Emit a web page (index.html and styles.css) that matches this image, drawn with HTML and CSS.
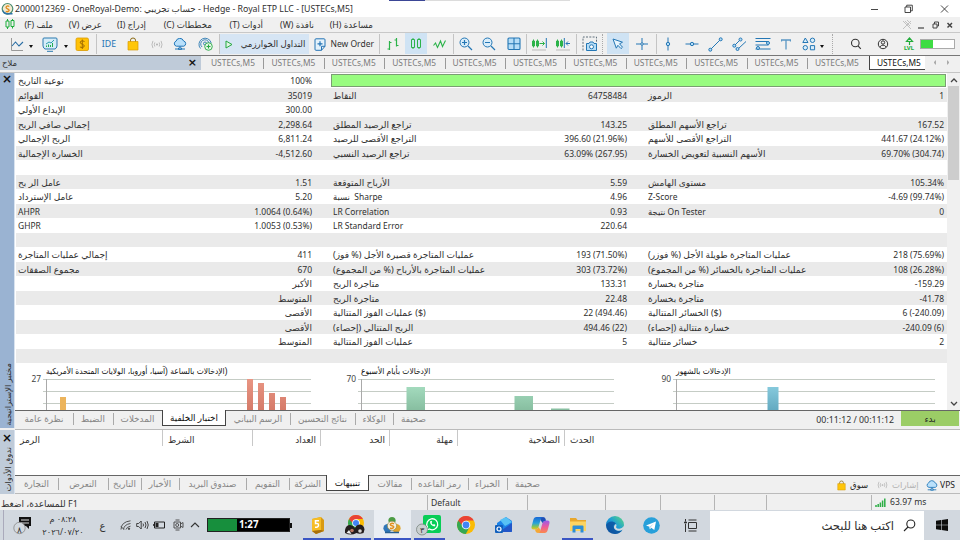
FILE: index.html
```html
<!DOCTYPE html>
<html lang="ar">
<head>
<meta charset="utf-8">
<title>MetaTrader 5</title>
<link rel="stylesheet" href="styles.css">
</head>
<body>
<svg width="0" height="0" class="defs">
  <defs>
    <linearGradient id="gr" x1="0" y1="0" x2="0" y2="1"><stop offset="0" stop-color="#e99583"/><stop offset="1" stop-color="#d47a68"/></linearGradient>
    <linearGradient id="gg" x1="0" y1="0" x2="0" y2="1"><stop offset="0" stop-color="#a3dabd"/><stop offset="1" stop-color="#86bd9f"/></linearGradient>
    <linearGradient id="gb" x1="0" y1="0" x2="0" y2="1"><stop offset="0" stop-color="#86c9dc"/><stop offset="1" stop-color="#62a9c0"/></linearGradient>
    <linearGradient id="cop1" x1="0" y1="0" x2="0" y2="1"><stop offset="0" stop-color="#1767d6"/><stop offset=".5" stop-color="#29a4d8"/><stop offset=".8" stop-color="#8fc649"/><stop offset="1" stop-color="#f2c324"/></linearGradient>
    <linearGradient id="cop2" x1="0" y1="0" x2="0" y2="1"><stop offset="0" stop-color="#9a5bea"/><stop offset=".5" stop-color="#ec5b9c"/><stop offset="1" stop-color="#fb8a4b"/></linearGradient>
    <linearGradient id="edg" x1="0" y1="1" x2="1" y2="0"><stop offset="0" stop-color="#0b57a8"/><stop offset=".5" stop-color="#1a9bd8"/><stop offset="1" stop-color="#5fdc7c"/></linearGradient>
    <symbol id="chrome" viewBox="0 0 18 18"><circle cx="9" cy="9" r="9" fill="#fbbc05"/><path d="M1.2 4.5A9 9 0 0 0 8.8 18L12.6 11Z" fill="#34a853"/><path d="M1.2 4.5A9 9 0 0 1 16.8 4.5H9L5 9Z" fill="#ea4335"/><circle cx="9" cy="9" r="4.3" fill="#fff"/><circle cx="9" cy="9" r="3.4" fill="#4285f4"/></symbol>
    <symbol id="mt" viewBox="0 0 18 18"><circle cx="9" cy="4.5" r="3.6" fill="#4b9c45"/><circle cx="4.6" cy="12.3" r="4.2" fill="#2e76b8"/><circle cx="13.4" cy="12.3" r="4.2" fill="#e0a52c"/><path d="M2 16.5h14" stroke="#286090" stroke-width="1.5"/><circle cx="9" cy="9.8" r="4.6" fill="#f4f1e4" stroke="#9a8b4c" stroke-width=".7"/><path d="M11 7.8Q9 6.5 7.7 7.8T9 9.8T10.3 11.8T7 12" fill="none" stroke="#e29020" stroke-width="1.5"/></symbol>
    <symbol id="coin" viewBox="0 0 13 13"><circle cx="6.500" cy="6.800" r="5.300" fill="#f3ead0" stroke="#4a8d72" stroke-width="1.200"/><path d="M1.500 9Q2 12 6 12.500H11.500V11H6Q3 10.500 2 8Z" fill="#2f74aa"/><path d="M8.300 4.500Q6.800 3.300 5.500 4.500T6.600 6.800T7.700 9.100T4.800 9.300" fill="none" stroke="#e08b1c" stroke-width="1.300"/></symbol>
    <symbol id="cloud" viewBox="0 0 14 12"><path d="M3.5 8.2A2.6 2.6 0 0 1 3 3.2A4 4 0 0 1 10.6 3A2.7 2.7 0 0 1 10.8 8.2Z" fill="#b9e0fb" stroke="#2076b8" stroke-width="1"/><path d="M7 8.2V10.5M2 11H5.5M8.5 11H12M5.5 10h3v1.6h-3z" stroke="#2076b8" stroke-width="1" fill="none"/></symbol>
    <symbol id="bag" viewBox="0 0 12 14"><path d="M3.5 5V3.2A2.5 2.2 0 0 1 8.5 3.2V5" fill="none" stroke="#8a6a14" stroke-width="1"/><path d="M1 4.5H11V13H1Z" fill="#ffc60a" stroke="#d79b07" stroke-width=".7"/></symbol>
    <symbol id="sig" viewBox="0 0 14 10"><path d="M2.5 1Q.3 5 2.5 9M4.6 2.7Q3.4 5 4.6 7.3M11.5 1Q13.7 5 11.5 9M9.4 2.7Q10.6 5 9.4 7.3" fill="none" stroke="#b0b0b0" stroke-width=".9"/><circle cx="7" cy="5" r="1.1" fill="#b0b0b0"/></symbol>
  </defs>
</svg>

<div class="window">
  <header class="titlebar">
    <svg class="applogo" width="13" height="13"><use href="#coin"/></svg>
    <span class="title">2000012369 - OneRoyal-Demo: حساب تجريبي - Hedge - Royal ETP LLC - [USTECs,M5]</span>
    <span class="strip"></span>
    <svg class="winctl" width="86" height="16" viewBox="0 0 86 16" fill="none" stroke="#333" stroke-width=".9"><path d="M4 8.500h7M38 6h5.500v5.500h-5.500zM39.700 6v-1.800h5.600v5.600h-1.800M74 4.500l7 7M81 4.500l-7 7"/></svg>
  </header>

  <nav class="menubar">
    <svg width="10" height="11" viewBox="0 0 10 11" fill="none" stroke="#1fae3c" stroke-width="1"><path d="M2.500 0v2M2.500 8v2M7.500 0v1.500M7.500 7.500v2M1 2h3v6h-3zM6 1.500h3v6h-3z"/></svg>
    <span class="m1">ملف (F)</span><span class="m2">عرض (V)</span><span class="m3">إدراج (I)</span><span class="m4">مخططات (C)</span><span class="m5">أدوات (T)</span><span class="m6">نافذة (W)</span><span class="m7">مساعدة (H)</span>
    <svg class="mdictl" width="54" height="12" viewBox="0 0 54 12" fill="none" stroke="#444" stroke-width="1.2"><path d="M2 2l8 8M10 2l-8 8M4 2l5 5M6 1l4 4" stroke="#bbb" stroke-width=".9"/><path d="M17 9h6"/><path d="M32 5h4v4h-4zM33.500 5v-2h4v4h-1.500" stroke-width="1"/><path d="M46.500 4l4.500 4.500M51 4l-4.500 4.500" stroke-width="1.500"/></svg>
  </nav>

  <div class="toolbar">
    <span></span>
    <i><svg width="14" height="13" viewBox="0 0 14 13" fill="none"><path d="M1.500 0v12.500H13" stroke="#999"/><path d="M2 8L5.500 4L9 8L13 4" stroke="#2b6fa5" stroke-width="1.100"/></svg></i>
    <i class="st"><b class="caret"></b></i>
    <i><svg width="16" height="15" viewBox="0 0 16 15" fill="none" stroke="#2a7ab0"><path d="M2 1h12q1 0 1 1v7q-.5 2.500-2 3h-10q-1.500-.5-2-3v-7q0-1 1-1z" fill="#d6ecf8"/><path d="M4 7l3-2 2 1 3-3" stroke="#2c9fae"/><path d="M4.500 10v-1.500M6.500 10v-2.500M8.500 10v-2M10.500 10v-4" stroke="#22ad52"/><path d="M5 14.300h6" /></svg></i>
    <i><b class="caret"></b></i>
    <i><svg width="14" height="14" viewBox="0 0 14 14"><rect x="1" y="1" width="12.500" height="12.500" rx="1.500" fill="#ffc107" stroke="#d99b00" stroke-width=".8"/><path d="M9.500 4.500Q7 3 5.500 4.500T7.200 7.200T9 9.800T4.900 10M7.300 2.500v9.500" fill="none" stroke="#a06c00" stroke-width="1"/></svg></i>
    <i class="sep ide">IDE</i>
    <i><svg width="12" height="14"><use href="#bag"/></svg></i>
    <i><svg width="14" height="9"><use href="#sig"/></svg></i>
    <i><svg width="14" height="12"><use href="#cloud"/></svg></i>
    <i><svg width="15" height="14" viewBox="0 0 15 14" fill="none" stroke="#2d7ab2" stroke-width=".9"><circle cx="7" cy="6.500" r="1.500"/><path d="M4 10A4.200 4.200 0 1 1 11 6M2.500 11.500A6.200 6.200 0 1 1 13.200 6"/><circle cx="10.500" cy="9.500" r="3.800" fill="#e4f7e6" stroke="#27a844"/><path d="M8.500 9.500h4M10.500 7.500v4" stroke="#27a844" stroke-width="1.100"/></svg></i>
    <i class="sep algo"><svg width="8" height="9" viewBox="0 0 8 9"><path d="M1 1v7l6-3.500z" fill="#e2f4e4" stroke="#25a93f"/></svg><span>التداول الخوارزمي</span></i>
    <i class="neworder"><svg width="12" height="13" viewBox="0 0 12 13" fill="none" stroke="#2474b5"><path d="M2 .8h8q1 0 1 1v6.500l-3.500 4H2q-1 0-1-1v-9.500q0-1 1-1zM11 8.300H7.500v4" fill="#e4f2fb"/><path d="M3.500 5.800h5M6 3.300v5" stroke-width="1.200"/></svg><span>New Order</span></i>
    <i class="sep"><svg width="14" height="13" viewBox="0 0 14 13" fill="none" stroke="#2cb34a" stroke-width="1.200"><path d="M3.500 3v9M3.500 4.500h2M1.500 11h2M10.500 0v8.500M8.500 2h2M10.500 7.500h2"/></svg></i>
    <i class="on"><svg width="12" height="13" viewBox="0 0 12 13" fill="none" stroke="#2cb34a"><path d="M1.500 2.500h3v8h-3zM7.500 2.500h3v8h-3zM3 1v1.500M3 10.500v1.500M9 1v1.500M9 10.500v1.500"/></svg></i>
    <i><svg width="14" height="10" viewBox="0 0 14 10" fill="none" stroke="#2cb34a" stroke-width="1.100"><path d="M.5 6.500L2.500 4l2 4.500L7.500 2l2 5.500L12.500 1.500"/></svg></i>
    <i class="sep"><svg width="14" height="14" viewBox="0 0 14 14" fill="#d9edfa" stroke="#2477b5"><circle cx="5.500" cy="5.500" r="4.500"/><path d="M9 9l4 4M3 5.500h5M5.500 3v5" stroke-width="1.200"/></svg></i>
    <i><svg width="14" height="14" viewBox="0 0 14 14" fill="#d9edfa" stroke="#2477b5"><circle cx="5.500" cy="5.500" r="4.500"/><path d="M9 9l4 4M3 5.500h5" stroke-width="1.200"/></svg></i>
    <i><svg width="14" height="14" viewBox="0 0 14 14" fill="#b5ddf7" stroke="#2477b5" stroke-width="1.100"><rect x="1" y="1" width="12" height="11.500" rx="1"/><path d="M7 1v11.500M1 6.700h12"/></svg></i>
    <i class="sep"><svg width="16" height="14" viewBox="0 0 16 14" fill="none" stroke="#2cb34a"><path d="M1.500 4h2v5h-2zM5.500 4h2v5h-2zM2.500 2.500v8M6.500 2.500v8M8.500 6.500h5M11.500 4.500l2 2-2 2"/><path d="M15.300 1v10" stroke="#2477b5"/><path d="M1 13h14" stroke="#bbb"/></svg></i>
    <i><svg width="16" height="14" viewBox="0 0 16 14" fill="#2cb34a" stroke="#2cb34a"><path d="M1.500 4h2v5h-2zM5.500 4h2v5h-2zM2.500 2.500v8M6.500 2.500v8"/><path d="M9.300 1v10M15 6.500h-4M13 4.500l-2 2 2 2" stroke="#2477b5" fill="none"/><path d="M1 13h14" stroke="#bbb"/></svg></i>
    <i class="sep"><svg width="16" height="16" viewBox="0 0 16 16" fill="none"><path d="M1 14.500V1h13.500v5" stroke="#60717d" stroke-dasharray="2 1.300"/><path d="M4.500 7.500h2.500l1-1.500h3l1 1.500h2.500v7h-10z" fill="#b5ddf7" stroke="#2477b5"/><circle cx="9.500" cy="10.800" r="2" fill="#fff" stroke="#2477b5"/></svg></i>
    <i class="dots"></i>
    <i class="on"><svg width="12" height="13" viewBox="0 0 12 13"><path d="M1 2l9.500 3.200-3 1.600 3 3.400-1.500 1.400-3.100-3.300-1.600 2.900z" fill="#e9f5fd" stroke="#2477b5"/></svg></i>
    <i><svg width="14" height="14" viewBox="0 0 14 14" fill="none" stroke="#2477b5"><path d="M7 1v4.500M7 8.500v4.500M1 7h4.500M8.500 7H13"/><circle cx="7" cy="7" r="1.300"/></svg></i>
    <i class="sep"><svg width="6" height="14" viewBox="0 0 6 14" fill="#b5ddf7" stroke="#2477b5"><path d="M3 .5v13"/><circle cx="3" cy="7" r="1.700"/></svg></i>
    <i><svg width="14" height="6" viewBox="0 0 14 6" fill="#b5ddf7" stroke="#2477b5"><path d="M.5 3h13"/><circle cx="7" cy="3" r="1.700"/></svg></i>
    <i><svg width="15" height="15" viewBox="0 0 15 15" fill="#b5ddf7" stroke="#2477b5"><path d="M2.500 12.500l10-10"/><circle cx="2.300" cy="12.700" r="1.500"/><circle cx="12.700" cy="2.300" r="1.500"/></svg></i>
    <i><svg width="15" height="15" viewBox="0 0 15 15" fill="#b5ddf7" stroke="#2477b5"><path d="M2 9l6.500-6.500M5.500 12.500l1 -1L14 4.500"/><circle cx="2.300" cy="8.700" r="1.500"/><circle cx="8.500" cy="2.500" r="1.500"/><circle cx="5.500" cy="12" r="1.500"/></svg></i>
    <i><svg width="16" height="14" viewBox="0 0 16 14" fill="#b5ddf7" stroke="#2477b5"><path d="M.5 1.500h15M.5 4.500h13M.5 8h13M.5 12h15"/><circle cx="13" cy="6" r="1.500"/><circle cx="3" cy="11" r="1.500"/></svg></i>
    <i><svg width="10" height="11" viewBox="0 0 10 11" fill="none" stroke="#5b97c4" stroke-width="1.300"><path d="M.5 2.500V1h9v1.500M5 1v9.500"/></svg></i>
    <i><svg width="14" height="14" viewBox="0 0 14 14" fill="#d9edfa" stroke="#2477b5"><path d="M3.300 1L6 5.500H.8z"/><circle cx="10.500" cy="3.300" r="2.200"/><circle cx="3.300" cy="10.700" r="2.200"/><path d="M8.400 8.600h4.200v4.200H8.400z"/></svg></i>
    <i class="st"><b class="caret"></b></i>
    <i class="dots"></i>
    <i><svg width="12" height="12" viewBox="0 0 12 12" fill="none" stroke="#333" stroke-width="1.100"><circle cx="5.300" cy="5" r="3.800"/><path d="M8 7.800l2.800 3"/></svg></i>
    <i><svg width="12" height="12" viewBox="0 0 12 12" fill="none" stroke="#333" stroke-width="1"><circle cx="6" cy="6" r="4.700"/><circle cx="6" cy="4.500" r="1.700"/><path d="M2.800 9q3.200-3.800 6.400 0"/></svg></i>
    <i class="lvl"><svg width="9" height="8" viewBox="0 0 9 8" fill="none" stroke="#22ac3a" stroke-width="1.200"><path d="M4.500 1L1.500 4.500h6zM4.500 4v4"/></svg>LVL</i>
    <i class="batt"><b></b></i>
  </div>

  <div class="tabsrow">
    <div class="navhead"><span>ملاح</span><b>×</b></div>
    <div class="ctab">USTECs,M5</div><div class="ctab">USTECs,M5</div><div class="ctab">USTECs,M5</div><div class="ctab">USTECs,M5</div><div class="ctab">USTECs,M5</div><div class="ctab">USTECs,M5</div><div class="ctab">USTECs,M5</div><div class="ctab">USTECs,M5</div><div class="ctab">USTECs,M5</div><div class="ctab">USTECs,M5</div><div class="ctab">USTECs,M5</div>
    <div class="ctab cur">USTECs,M5</div>
    <div class="arrows"><span></span><span></span></div>
  </div>

  <section class="tester">
    <aside class="side s1"><b>×</b><span>مختبر الإستراتيجية</span></aside>
    <div class="main">
      <div class="report">
        <div class="rows">
          <div class="row"><p>نوعية التاريخ</p><em>100%</em><div class="quality"></div></div>
          <div class="row"><p>القوائم</p><em>35019</em><p>النقاط</p><em>64758484</em><p>الرموز</p><em>1</em></div>
          <div class="row"><p>الإيداع الأولي</p><em>300.00</em></div>
          <div class="row"><p>إجمالي صافي الربح</p><em>2,298.64</em><p>تراجع الرصيد المطلق</p><em>143.25</em><p>تراجع الأسهم المطلق</p><em>167.52</em></div>
          <div class="row"><p>الربح الإجمالي</p><em>6,811.24</em><p>التراجع الأقصى للرصيد</p><em>396.60 (21.96%)</em><p>التراجع الأقصى للأسهم</p><em>441.67 (24.12%)</em></div>
          <div class="row"><p>الخسارة الإجمالية</p><em>-4,512.60</em><p>تراجع الرصيد النسبي</p><em>63.09% (267.95)</em><p>الأسهم النسبية لتعويض الخسارة</p><em>69.70% (304.74)</em></div>
          <div class="row"></div>
          <div class="row"><p>عامل الر بح</p><em>1.51</em><p>الأرباح المتوقعة</p><em>5.59</em><p>مستوى الهامش</p><em>105.34%</em></div>
          <div class="row"><p>عامل الإسترداد</p><em>5.20</em><p class="lat">نسبة&nbsp; Sharpe</p><em>4.96</em><p class="lat">Z-Score</p><em>-4.69 (99.74%)</em></div>
          <div class="row"><p class="lat">AHPR</p><em>1.0064 (0.64%)</em><p class="lat">LR Correlation</p><em>0.93</em><p class="lat">نتيجة On Tester</p><em>0</em></div>
          <div class="row"><p class="lat">GHPR</p><em>1.0053 (0.53%)</em><p class="lat">LR Standard Error</p><em>220.64</em></div>
          <div class="row"></div>
          <div class="row"><p>إجمالي عمليات المتاجرة</p><em>411</em><p><bdi dir="rtl">عمليات المتاجرة قصيرة الأجل (% فوز)</bdi></p><em>193 (71.50%)</em><p><bdi dir="rtl">عمليات المتاجرة طويلة الأجل (% فوزر)</bdi></p><em>218 (75.69%)</em></div>
          <div class="row"><p>مجموع الصفقات</p><em>670</em><p><bdi dir="rtl">عمليات المتاجرة بالأرباح (% من المجموع)</bdi></p><em>303 (73.72%)</em><p><bdi dir="rtl">عمليات المتاجرة بالخسائر (% من المجموع)</bdi></p><em>108 (26.28%)</em></div>
          <div class="row"><p></p><em class="ar">الأكبر</em><p>متاجرة الربح</p><em>133.31</em><p>متاجرة بخسارة</p><em>-159.29</em></div>
          <div class="row"><p></p><em class="ar">المتوسط</em><p>متاجرة الربح</p><em>22.48</em><p>متاجرة بخسارة</p><em>-41.78</em></div>
          <div class="row"><p></p><em class="ar">الأقصى</em><p>عمليات الفوز المتتالية ($)</p><em>22 (494.46)</em><p>الخسائر المتتالية ($)</p><em>6 (-240.09)</em></div>
          <div class="row"><p></p><em class="ar">الأقصى</em><p><bdi dir="rtl">الربح المتتالي (إحصاء)</bdi></p><em>494.46 (22)</em><p><bdi dir="rtl">خسارة متتالية (إحصاء)</bdi></p><em>-240.09 (6)</em></div>
          <div class="row"><p></p><em class="ar">المتوسط</em><p>عمليات الفوز المتتالية</p><em>5</em><p>خسائر متتالية</p><em>2</em></div>
          <div class="row"></div>
          <div class="charts">
            <figure class="f1"><figcaption><bdi dir="rtl">الإدخالات بالساعة (آسيا، أوروبا، الولايات المتحدة الأمريكية</bdi>)</figcaption><span class="ax">27</span>
              <svg width="268" height="33" viewBox="0 0 268 33"><path d="M0 1.500h268M0 13.500h268M0 25.500h268" stroke="#c5ccc5"/><path d="M3.500 1v32" stroke="#aaa"/><rect x="17" y="19" width="6" height="14" fill="#ecb45c"/><path d="M204 1h6v32h-6zM215 5h6v28h-6zM226 15h6v18h-6zM237 19h6v14h-6z" fill="url(#gr)"/></svg></figure>
            <figure class="f2"><figcaption>الإدخالات بأيام الأسبوع</figcaption><span class="ax">70</span>
              <svg width="256" height="33" viewBox="0 0 256 33"><path d="M0 1.500h256M0 13.500h256M0 25.500h256" stroke="#c5ccc5"/><path d="M3.500 1v32" stroke="#aaa"/><path d="M48.500 9h18.500v24h-18.500zM156.500 18h18.500v15h-18.500zM193 30.500h18.500v2.500h-18.500z" fill="url(#gg)"/></svg></figure>
            <figure class="f3"><figcaption>الإدخالات بالشهور</figcaption><span class="ax">90</span>
              <svg width="262" height="33" viewBox="0 0 262 33"><path d="M0 1.500h262M0 13.500h262M0 25.500h262" stroke="#c5ccc5"/><path d="M3.500 1v32" stroke="#aaa"/><path d="M94.500 9h11v24h-11z" fill="url(#gb)"/></svg></figure>
          </div>
        </div>
        <div class="scroll"><svg width="8" height="5" viewBox="0 0 8 5"><path d="M1 4l3-3 3 3" fill="none" stroke="#444" stroke-width="1.300"/></svg><b></b><svg width="8" height="5" viewBox="0 0 8 5"><path d="M1 1l3 3 3-3" fill="none" stroke="#444" stroke-width="1.300"/></svg></div>
      </div>
      <div class="btabs t1">
        <span>نظرة عامة</span><span>الضبط</span><span>المدخلات</span><span class="cur">اختبار الخلفية</span><span>الرسم البياني</span><span>نتائج التحسين</span><span>الوكلاء</span><span>صحيفة</span>
        <div class="time">00:11:12 / 00:11:12</div><div class="start">بدء</div>
      </div>
    </div>
  </section>

  <section class="toolbox">
    <aside class="side s2"><b>×</b><span>ندوق الأدوات</span></aside>
    <div class="main">
      <div class="thead"><span>الرمز</span><span>الشرط</span><span class="r">العداد</span><span class="r">الحد</span><span class="r">مهلة</span><span class="r">الصلاحية</span><span>الحدث</span></div>
      <div class="btabs t2">
        <span>التجارة</span><span>التعرض</span><span>التاريخ</span><span>الأخبار</span><span>صندوق البريد</span><span>التقويم</span><span>الشركة</span><span class="cur">تنبيهات</span><span>مقالات</span><span>رمز القاعده</span><span>الخبراء</span><span>صحيفة</span>
        <div class="links"><svg width="9" height="11"><use href="#bag"/></svg><b class="k1">سوق</b><svg width="11" height="8"><use href="#sig"/></svg><b class="k2">إشارات</b><svg width="12" height="11"><use href="#cloud"/></svg><b class="k3">VPS</b></div>
      </div>
    </div>
  </section>

  <footer class="status">
    <span class="help">للمساعدة، اضغط F1</span><span>Default</span><span></span><span></span><span></span><span></span><span></span>
    <span class="ping"><svg width="11" height="9" viewBox="0 0 11 9"><path d="M1 7v2M3.200 6v3M5.400 4.500v4.500M7.600 2.500v6.500M9.800 .5v8.500" stroke="#2cae45" stroke-width="1.500"/></svg>63.97 ms</span>
  </footer>

  <div class="taskbar">
    <span class="desk"></span>
    <i class="notif"><svg width="19" height="20" viewBox="0 0 19 20"><path d="M6 2h12v9h-2v3l-3-3H6z" fill="#111"/><path d="M8 5h8M8 8h8" stroke="#ddd"/><circle cx="6.500" cy="13" r="5.700" fill="#d3d9df" stroke="#888" stroke-width=".8"/></svg><b>٨</b></i>
    <div class="clock"><span dir="rtl">٠٨:٢٨ م</span><span>٢٠٢٦/٠٧/٢٠</span></div>
    <i class="lang">ع</i>
    <i><svg width="11" height="10" viewBox="0 0 11 10" fill="none" stroke="#444" stroke-width=".9"><path d="M1 9.500Q1 2 10.500 .8M3.500 9.500Q4 4.500 10.500 3.500M6 9.500Q6.500 7 10.500 6.200M1 6.500L4 9.500"/><circle cx="9" cy="8.800" r=".7" fill="#222"/></svg></i>
    <i></i>
    <i class="spk"><svg width="13" height="10" viewBox="0 0 13 10" fill="none" stroke="#333" stroke-width=".9"><path d="M.7 3.500h2l2.500-2.500v8L2.700 6.500h-2zM7 3.500q1 1.500 0 3M9 2q2 3 0 6M11 1q2.500 4 0 8"/></svg></i>
    <i><svg width="12" height="8" viewBox="0 0 12 8"><path d="M1.500 1h10v6h-10zM.3 3v2" fill="none" stroke="#222"/><path d="M2.500 2h3v4h-3z" fill="#222"/></svg></i>
    <i><svg width="11" height="12" viewBox="0 0 11 12" fill="none" stroke="#444" stroke-width=".9"><path d="M1 3h6.500v6h-6.500zM7.500 5l2.500-1.500v5l-2.500-1.500M2.500 1h4M2.500 11h4"/><circle cx="4.200" cy="6" r="1.500"/></svg></i>
    <i><svg width="10" height="6" viewBox="0 0 10 6"><path d="M1 5l4-4 4 4" fill="none" stroke="#333" stroke-width="1.100"/></svg></i>
    <div class="power"><b></b><span>1:27</span></div>
    <i class="run"><svg width="16" height="19" viewBox="0 0 16 19"><path d="M2 3L11 1l3 3v11l-8 3-4-3z" fill="#d99a12"/><path d="M2 3l9-2v13l-9 1z" fill="#f6bd25"/><path d="M2 15l9-1 3 1-8 3z" fill="#a86f0a"/><path d="M9 4.800H5.500v2.700q3-.5 3 1.700T5 11.200" stroke="#fff" fill="none" stroke-width="1.500"/></svg></i>
    <i class="run"><svg width="20" height="20" viewBox="0 0 20 20"><use href="#chrome" x="3" y="0" width="16" height="16"/><path d="M0 15q1-5 5-5 4 .5 5 3.500 1-4 5-4 4 .5 4.500 5l-1 3.500q-4 1.500-7 0-6 3-11.500 0z" fill="#241d1d"/><circle cx="7" cy="15.500" r="1.800" fill="#ba7762"/><circle cx="15" cy="16" r="1.800" fill="#d8d6d4"/><path d="M1.500 18l2.500-3 2.500 4z" fill="#eee"/></svg></i>
    <i class="run act"><svg width="18" height="18"><use href="#mt"/></svg></i>
    <i class="run wa"><svg width="26" height="22" viewBox="0 0 26 22"><rect x="7" y="1" width="18" height="18" rx="2" fill="#08ce57"/><path d="M10.500 16l1-3a5.500 5.500 0 1 1 2 2z" fill="none" stroke="#fff" stroke-width="1.300"/><path d="M14 7.500q0 4 4.500 5l1-1.500-1.500-1-1 .8q-1.300-.8-1.500-2l.7-.8-.7-1.300z" fill="#fff"/><circle cx="6" cy="15.500" r="5.500" fill="#c9cfd0" stroke="#7a8580" stroke-width=".8"/></svg><b>٣</b></i>
    <i><svg width="18" height="18"><use href="#chrome"/></svg></i>
    <i><svg width="19" height="18" viewBox="0 0 19 18"><path d="M3 7l9-6 6 4v10q0 1-1 1H5q-2 0-2-2z" fill="#1c83e8"/><path d="M6 4l6-3 6 5-7 4z" fill="#58c2f5"/><path d="M5 16L18 7v8q0 1-1 1z" fill="#2256c8"/><rect x="1" y="9" width="8" height="8" rx="1" fill="#1260bd"/><circle cx="5" cy="13" r="2" fill="none" stroke="#fff" stroke-width="1.200"/></svg></i>
    <i><svg width="19" height="18" viewBox="0 0 19 18"><path d="M5.500 1H12q-2 .8-2.500 3L7.500 11q-.7 2.500-3 2.500H2.500Q0 13.500.6 10.500L2.300 4Q3 1 5.500 1z" fill="url(#cop1)"/><path d="M13.500 17H7q2-.8 2.500-3l2-7q.7-2.500 3-2.500h2Q19 4.500 18.400 7.500L16.700 14Q16 17 13.500 17z" fill="url(#cop2)"/><path d="M9.500 4Q10 1 12 1q2 0 2.500 1.700l.5 1.800q-2.800 0-3.500 2.500z" fill="#1f50b8"/><path d="M9.500 14Q9 17 7 17q-2 0-2.500-1.700L4 13.500q2.800 0 3.500-2.500z" fill="#f4a836"/></svg></i>
    <i class="run"><svg width="18" height="16" viewBox="0 0 18 16"><path d="M1 1h6l1.500 2H17v4H1z" fill="#e8a72c"/><path d="M1 4.500h16V14H1z" fill="#fcd462"/><path d="M3.500 15.500V9.500q0-1 1-1h9q1 0 1 1v6h-3v-3.500h-5v3.500z" fill="#2d8ed6"/></svg></i>
    <i><svg width="18" height="18" viewBox="0 0 18 18"><circle cx="9" cy="9" r="9" fill="url(#edg)"/><path d="M.1 9Q2 5 6.500 5.500 9.500 6 10 8 7.500 8 7.500 10.500 8 14.500 12 15q2.500.2 4.500-1.300Q13.500 18 9 18 .5 17.500.1 9z" fill="#0c4f9c" opacity=".8"/><path d="M10 8q1 1.500 0 3.200 .8 1.600 3.500 1.500 2.500-.3 4-2.200L17.900 10 18 12.500 16.500 13.700Q14 15.300 11 14.500 7.500 13 8 10.500 8.500 8.500 10 8z" fill="#d3d9df"/></svg></i>
    <i><svg width="17" height="17" viewBox="0 0 17 17"><circle cx="8.500" cy="8.500" r="8.300" fill="#28a0da"/><path d="M3 8.500l10-4-1.700 8.500-3-2.200-1.500 1.500-.4-2.600z" fill="#fff"/><path d="M6.400 9.700l4.500-3.300-3 3.700-1 2z" fill="#bcdcf0"/></svg></i>
    <i><svg width="13" height="13" viewBox="0 0 13 13" fill="none" stroke="#333"><path d="M4.500 3.500h8v6h-8zM4.500 1h8M4.500 12h8M1.500 0v2.500M1.500 5v8"/><path d="M.5 4h2v-1h-2z" fill="#333"/></svg></i>
    <div class="search"><span>اكتب هنا للبحث</span><svg width="13" height="13" viewBox="0 0 13 13" fill="none" stroke="#222" stroke-width="1.100"><circle cx="7.800" cy="5" r="4"/><path d="M5 8L1 12"/></svg></div>
    <i><svg width="12" height="12" viewBox="0 0 12 12" fill="#0d0d0d"><path d="M0 1.700L5 1v4.700H0zM5.600 .9L12 0v5.700H5.600zM0 6.300h5V11l-5-.7zM5.600 6.300H12V12l-6.400-.9z"/></svg></i>
  </div>
</div>
</body>
</html>
```
FILE: styles.css
```css
* { box-sizing: border-box; }
body { margin: 0; width: 960px; height: 540px; overflow: hidden; background: #f0f0f0; color: #303030; font: 8.5px/14px "Noto Sans", "DejaVu Sans", sans-serif; }
.defs { position: absolute; }
i, em { font-style: normal; }
b { font-weight: normal; }
p, figure { margin: 0; }
svg { display: block; flex: none; }
.window { display: flex; flex-direction: column; width: 960px; height: 540px; }

.titlebar { position: relative; display: flex; align-items: center; height: 17px; background: #fff; padding-left: 1px; }
.title { margin-left: 1px; font-size: 8.75px; white-space: pre; padding-top: 1px; }
.strip { position: absolute; left: 389px; top: 0; width: 181px; height: 1px; background: linear-gradient(90deg, #3b4696 36px, #dcdcdc 36px); }
.winctl { margin-left: auto; margin-right: 7px; }

.menubar { display: flex; align-items: center; height: 15px; padding-left: 5px; }
.menubar span { direction: rtl; white-space: nowrap; text-align: right; font-size: 8.7px; padding-top: 1px; }
.m1 { width: 38px; } .m2 { width: 49px; } .m3 { width: 44px; } .m4 { width: 66px; } .m5 { width: 51px; } .m6 { width: 51px; } .m7 { width: 59px; }
.mdictl { margin-left: auto; margin-right: 5px; }

.toolbar { display: grid; height: 24px; border-top: 1px solid #c8c8c8; border-bottom: 1px solid #777; grid-template-columns: 5px 24px 8px 26px 5px 28px 25px 24px 23px 24px 26.5px 90px 70.5px 26px 22px 26px 24px 24px 25px 24px 26px 26px 5px 22px 26.5px 24.5px 23px 24px 24px 23px 24px 22px 12px 12px 24px 30px 22px 40px; }
.toolbar i { position: relative; display: flex; align-items: center; justify-content: center; height: 22px; }
.toolbar .st { justify-content: flex-start; }
.caret { width: 0; height: 0; border: 2.5px solid transparent; border-top: 3px solid #111; border-bottom: 0; margin-top: 4px; }
.toolbar .sep { border-left: 1px solid #c4c4c4; height: 20px; margin-top: 1px; }
.toolbar .on { background: #cfe3f4; height: 21px; margin-top: 0; }
.toolbar .dots { border-left: 1px dotted #aaa; height: 20px; margin-top: 1px; }
.toolbar .ide { color: #2474b5; font-size: 8.8px; }
.toolbar .algo { background: #d6e5f4; gap: 8px; padding-left: 2px; font-size: 8.6px; white-space: nowrap; }
.toolbar .neworder { gap: 5px; white-space: nowrap; font-size: 8.5px; }
.toolbar .lvl { flex-direction: column; color: #22ac3a; font: bold 6px/6px Roboto, sans-serif; }
.toolbar .batt { justify-content: flex-start; }
.batt b { width: 35px; height: 10px; border: 1px solid #aaa; background: linear-gradient(90deg, #3edc43 12px, #fff 12px); }

.tabsrow { display: flex; height: 17px; border-bottom: 1px solid #c4c4c4; }
.navhead { display: flex; justify-content: space-between; width: 201px; padding: 0 4px 0 2px; height: 14px; background: #bfcbd9; line-height: 14px; }
.navhead b { font: bold 11px/14px "DejaVu Sans"; color: #111; }
.ctab { position: relative; width: 60.4px; padding-left: 10px; line-height: 14px; color: #7c7c7c; font-size: 8.4px; white-space: nowrap; }
.ctab + .ctab::before { content: ""; position: absolute; left: 2px; top: 2px; width: 1px; height: 11px; background: #999; }
.ctab.cur { width: 56px; margin-left: 3.6px; padding-left: 7px; height: 14px; background: #fff; color: #111; border: solid #444; border-width: 0 0 1px 1px; }
.ctab.cur::before { display: none; }
.arrows { display: flex; gap: 11px; margin: 4px 0 0 9px; }
.arrows span { border: 2.500px solid transparent; border-right-color: #aaa; border-left: 0; height: 5px; }
.arrows span + span { border-left: 2.500px solid #aaa; border-right: 0; }

.tester { display: flex; height: 357px; }
.main { display: flex; flex-direction: column; flex: 1; min-width: 0; background: #fff; }
.side { display: flex; flex-direction: column; align-items: center; width: 15px; background: #9ab3d2; border-right: 1px solid #d9e3ef; justify-content: space-between; }
.side b { font: bold 12px/13px "DejaVu Sans"; color: #111; }
.side span { writing-mode: vertical-rl; transform: rotate(180deg); font-size: 8.4px; line-height: 13px; white-space: nowrap; }
.s1 { padding-bottom: 2px; height: 355px; }
.s2 { background: #bfcbd9; padding: 2px 0; }
.report { display: flex; height: 338px; border-bottom: 1px solid #666; }
.rows { width: 932px; overflow: hidden; }
.row { display: flex; height: 14.500px; padding-left: 2px; margin-left: 1px; line-height: 15.500px; white-space: nowrap; }
.row:nth-child(even) { background: #eaeaea; }
.row p { width: 160px; font-size: 9px; }
.row p.lat { font-size: 8.45px; }
.row em { width: 134px; text-align: right; }
.row em.ar { font-size: 9px; }
.row p + em + p { margin-left: 21px; }
.row em:nth-of-type(2) { width: 134px; }
.row em:nth-of-type(3) { width: 136px; }
.quality { flex: none; width: 615px; height: 13px; margin: 1px 0 0 19px; background: #98fc80; border: 1px solid #7b9d74; }
.charts { display: flex; height: 48px; }
figure { position: relative; display: flex; flex-direction: column; padding-top: 1px; }
figcaption { height: 14px; line-height: 15px; font-size: 8.35px; font-family: "Liberation Sans", "DejaVu Sans Condensed", sans-serif; color: #111; white-space: nowrap; padding-left: 3px; }
.ax { position: absolute; left: -16px; top: 9px; width: 14px; text-align: right; font-size: 8.400px; color: #444; }
.f1 { margin-left: 28px; width: 315px; } .f2 { width: 315px; } .f3 { width: 262px; }
.scroll { display: flex; flex-direction: column; align-items: center; width: 13px; padding: 5px 0 4px; background: #f0f0f0; }
.scroll b { width: 11px; height: 94px; margin: 3px 0 auto; background: #cdcdcd; }

.btabs { display: flex; background: #f0f0f0; color: #858585; font-size: 8.8px; white-space: nowrap; }
.btabs > span { position: relative; height: 15px; line-height: 16px; text-align: center; }
.btabs > span + span::before { content: ""; position: absolute; left: 0; top: 2px; width: 1px; height: 12px; background: #aaa; }
.btabs .cur { background: #fff; color: #111; border: 1px solid #444; border-top: 0; margin-top: -1px; height: 16px; line-height: 17px; }
.btabs .cur::before, .btabs .cur + span::before { display: none; }
.t1 { height: 19px; border-bottom: 1px solid #bbb; }
.t1 span:nth-child(1) { width: 58px; } .t1 span:nth-child(2) { width: 40px; } .t1 span:nth-child(3) { width: 49px; } .t1 span:nth-child(4) { width: 64px; } .t1 span:nth-child(5) { width: 64px; } .t1 span:nth-child(6) { width: 65px; } .t1 span:nth-child(7) { width: 38px; } .t1 span:nth-child(8) { width: 41px; }
.time { margin-left: auto; line-height: 18px; color: #333; padding-right: 7px; font-size: 8.8px; }
.start { width: 58px; margin-right: 1px; height: 15px; line-height: 16px; background: #9bcd66; color: #222; text-align: center; }

.toolbox { display: flex; height: 64px; }
.thead { display: flex; height: 46px; border-bottom: 1px solid #666; white-space: nowrap; line-height: 19px; font-size: 9px; }
.thead span { height: 16px; padding: 0 4px 0 5px; border-right: 1px solid #c8c8c8; }
.thead .r { text-align: right; }
.thead span:nth-child(1) { width: 148px; } .thead span:nth-child(2) { width: 90px; } .thead span:nth-child(3) { width: 68px; } .thead span:nth-child(4) { width: 69px; } .thead span:nth-child(5) { width: 68px; } .thead span:nth-child(6) { width: 107px; } .thead span:nth-child(7) { border: 0; }
.t2 { height: 18px; border-bottom: 1px solid #bbb; }
.t2 span:nth-child(1) { width: 43px; } .t2 span:nth-child(2) { width: 50px; } .t2 span:nth-child(3) { width: 33px; } .t2 span:nth-child(4) { width: 38px; } .t2 span:nth-child(5) { width: 67px; } .t2 span:nth-child(6) { width: 43px; } .t2 span:nth-child(7) { width: 37px; } .t2 span:nth-child(8) { width: 43px; } .t2 span:nth-child(9) { width: 42px; } .t2 span:nth-child(10) { width: 57px; } .t2 span:nth-child(11) { width: 39px; } .t2 span:nth-child(12) { width: 41px; }
.links { display: flex; align-items: center; margin-left: auto; height: 18px; padding-right: 5px; font-size: 8.500px; }
.links b { margin-left: 4px; color: #222; }
.links .k1 { width: 27px; } .links .k2 { width: 34px; color: #b3b3b3; } .links .k3 { margin-left: 2px; }

.status { display: flex; height: 16px; padding-top: 1px; white-space: nowrap; }
.status span { border-right: 1px solid #b5b5b5; padding-left: 3px; line-height: 17px; height: 15px; font-size: 8.600px; }
.status span:nth-child(1) { width: 428px; padding-left: 1px; font-size: 9px; } .status span:nth-child(2) { width: 100px; } .status span:nth-child(3) { width: 78px; } .status span:nth-child(4) { width: 55px; } .status span:nth-child(5) { width: 54px; } .status span:nth-child(6) { width: 52px; } .status span:nth-child(7) { width: 105px; }
.status .ping { display: flex; align-items: center; gap: 4px; border: 0; }

.taskbar { display: grid; grid-template-columns: 13px 19px 62px 17px 28px 0 7px 26px 12px 22px 94px 36.5px repeat(9, 37.100px) 39.600px 214px 37px; height: 30px; background: #d2d8df; align-items: center; }
.taskbar i { position: relative; display: flex; align-items: center; justify-content: center; height: 30px; }
.desk { border-right: 1px solid #aab; width: 4px; height: 30px; }
.notif b { position: absolute; left: 2px; top: 12px; font-size: 9px; line-height: 16px; width: 9px; text-align: center; }
.clock { display: flex; flex-direction: column; align-items: center; font-size: 8.200px; line-height: 13px; white-space: nowrap; }
.lang { font-size: 10px; }
.power { position: relative; width: 83px; height: 14px; margin-left: 1px; background: linear-gradient(90deg, #178f3d 29px, #000 29px); color: #fff; border: 1px solid #222; }
.power span { position: absolute; left: 31px; top: -1px; font-size: 9.800px; font-weight: bold; }
.power b { position: absolute; right: -3px; top: 4px; width: 2px; height: 5px; background: #111; }
.run::after { content: ""; position: absolute; left: 3px; right: 3px; bottom: 0; height: 2px; background: #3a55c4; }
.act { background: #eaeef3; }
.act::after { left: 0; right: 0; }
.wa b { position: absolute; left: 6px; top: 12px; width: 11px; text-align: center; font-size: 8px; line-height: 16px; }
.search { display: flex; align-items: center; justify-content: flex-end; gap: 9px; height: 29px; margin-top: 1px; padding-right: 8px; background: #fff; font-size: 11.600px; }
```
